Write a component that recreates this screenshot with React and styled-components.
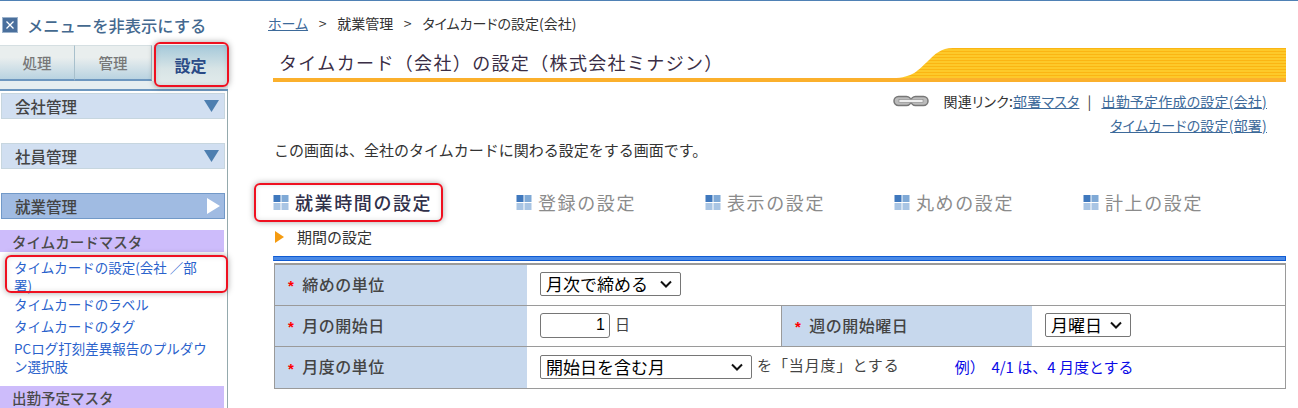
import React from 'react';
import styled, { createGlobalStyle, css } from 'styled-components';

const Global = createGlobalStyle`
  html, body { margin: 0; padding: 0; background: #fff; overflow: hidden; }
  body { font-family: "Noto Sans CJK JP", "Liberation Sans", sans-serif; text-spacing-trim: space-all; }
`;

const chevron = "url(\"data:image/svg+xml,%3Csvg xmlns='http://www.w3.org/2000/svg' width='12' height='8'%3E%3Cpath d='M1 1.5l5 5 5-5' fill='none' stroke='%23111' stroke-width='2'/%3E%3C/svg%3E\")";

const Page = styled.div`
  width: 1298px; height: 408px; overflow: hidden;
  border-top: 1px solid #4f81b5; box-sizing: border-box;
  display: flex; align-items: flex-start;
`;
const Side = styled.aside`
  width: 228px; height: 407px; flex: none; box-sizing: border-box; overflow: hidden;
`;
const Hide = styled.div`
  height: 44px; display: flex; align-items: center; gap: 9px; padding: 4px 0 0 2px; box-sizing: border-box;
  font-size: 16.3px; font-weight: 500; color: #44698f; white-space: nowrap;
`;
const XBox = styled.svg`
  width: 16px; height: 16px; flex: none;
`;
const TopTabs = styled.div`
  display: flex; height: 46px; box-sizing: border-box; border-bottom: 2px solid #6d97bf; width: 229px; padding-bottom: 5px;
  position: relative; background: linear-gradient(#fff 0 36px, #e6eef0 36px);
`;
const TopTab = styled.div`
  height: 36px; width: ${p => p.$w}px; box-sizing: border-box; display: flex; align-items: center; justify-content: center;
  border-right: 1px solid #a8c0cc; border-bottom: 2px solid #6d97bf; border-top: 1px solid #d5dfe2;
  background: linear-gradient(#e9eeee 0%, #e9eeee 35%, #b9d3e1 100%);
  font-size: 14.5px; font-weight: 500; color: #777;
  ${p => p.$active && css`
    height: 43px; border: 0; color: #2a4a86; font-size: 16px; font-weight: 700; margin-left: 2px; width: 73px;
    background: linear-gradient(#a4c8da 0%, #d7e4e6 55%, #e4ecec 100%);
    padding-bottom: 3px;
  `}
`;
const Redbox = styled.span`
  position: absolute; pointer-events: none; box-sizing: border-box; border: 2px solid #ef1020; border-radius: 6px;
  box-shadow: 0 0 6px rgba(0,0,0,.35), inset 0 0 5px rgba(0,0,0,.12);
  left: ${p => p.$l}px; top: ${p => p.$t}px; width: ${p => p.$w}px; height: ${p => p.$h}px;
`;
const Rail = styled.div`
  width: 228px; height: 320px; box-sizing: border-box; border-right: 1px solid #94a9ad; padding: 2px 2px 0 1px;
`;
const Group = styled.div`
  height: 26px; box-sizing: border-box; display: flex; align-items: center; justify-content: space-between;
  margin-bottom: ${p => p.$mb}px; padding: 0 4px 0 13px;
  border: 1px solid ${p => p.$on ? '#7299c8' : '#c7d6df'};
  background: ${p => p.$on ? '#a0bbe2' : '#d1dff1'};
  font-size: 15.5px; font-weight: 500; color: #444;
`;
const Sub = styled.div`
  height: 22px; width: 224px; margin-left: -1px; display: flex; align-items: center; padding-left: 12px; box-sizing: border-box;
  background: #cdbcfb; color: #4a4a4a; font-size: 14.5px; font-weight: 500;
`;
const SideLink = styled.a`
  display: block; box-sizing: border-box; width: 208px; padding-left: 13px; margin-top: ${p => p.$mt || 0}px; margin-bottom: ${p => p.$mb ?? 4}px;
  color: #2a62cc; font-size: 13.5px; line-height: 18px;
`;
const Main = styled.main`
  flex: 1; min-width: 0; padding-left: 40px; position: relative; height: 407px; box-sizing: border-box;
`;
const Crumbs = styled.div`
  margin: 14px 0 0; height: 17px; font-size: 14px; line-height: 17px; color: #333; white-space: pre;
  word-spacing: 2.2px; font-feature-settings: "palt";
  a { color: #3d6a9a; text-decoration: underline; }
`;
const TitleBar = styled.div`
  position: relative; margin: 16px 12px 0 5px; width: 1013px; height: 34px; display: flex; align-items: flex-start;
`;
const Title = styled.h1`
  margin: 2px 0 0 6px; font-size: 18px; font-weight: 400; line-height: 24px; letter-spacing: 1.35px; color: #3a2e45; white-space: nowrap; position: relative;
`;
const Swoosh = styled.svg`
  position: absolute; left: 0; top: 0; width: 1013px; height: 34px;
`;
const Rel = styled.div`
  width: 994px; margin: 7px 0 0 5px; display: flex; flex-direction: column; align-items: flex-end; font-size: 14px; line-height: 24px; color: #333; white-space: pre;
  font-feature-settings: "palt"; letter-spacing: .2px;
  a { color: #3d6a9a; text-decoration: underline; }
`;
const RelRow = styled.div`display: flex; align-items: center;`;
const Sep = styled.span`margin: 0 10px 0 8px;`;
const Intro = styled.p`
  margin: 3px 0 0 6px; font-size: 15px; line-height: 20px; color: #333;
`;
const Tabs = styled.div`
  display: flex; margin: 29px 0 0 5px; height: 26px; align-items: center;
`;
const Tab = styled.div`
  width: ${p => p.$w}px; flex: none; display: flex; align-items: center; gap: 5px; white-space: nowrap;
  font-size: 18px; letter-spacing: 1.6px; color: ${p => p.$on ? '#30304a' : '#8b8b8b'}; font-weight: ${p => p.$on ? 500 : 400};
`;
const Grid4 = styled.svg`width: 17px; height: 17px; flex: none;`;
const Period = styled.div`
  margin: 12px 0 0 7px; display: flex; align-items: center; gap: 13px; font-size: 15px; line-height: 20px; color: #333;
`;
const Tri = styled.span`
  width: 0; height: 0; border-left: 9px solid #f59b10; border-top: 6px solid transparent; border-bottom: 6px solid transparent;
`;
const Blue = styled.div`
  margin: 9px 0 0 5px; width: 1013px; height: 5px; box-sizing: border-box; background: #4b8ae6; border: 1px solid #0f5bd3; border-left-color:#3c7be0;
`;
const Table = styled.div`
  margin: 2px 0 0 6px; width: 1012px; box-sizing: border-box; border: 1px solid #9a9a9a; border-top-width: 2px;
  display: grid; grid-template-columns: 252px 253px 1px 251px 1fr; grid-auto-rows: 41px;
`;
const Th = styled.div`
  background: #c7d8ed; display: flex; align-items: center; gap: 8px; padding: 0 0 3px 13px; font-size: 16px; letter-spacing: .5px; font-weight: 500; color: #444;
  ${p => p.$b && 'border-bottom: 1px solid #9a9a9a;'} ${p => p.$l && 'border-left: 1px solid #9a9a9a;'} box-sizing: border-box;
`;
const Star = styled.span`color: #f00; font: 700 15px/1 "Liberation Sans", sans-serif; position: relative; top: 2px;`;
const Td = styled.div`
  display: flex; align-items: center; padding: 0 0 2px ${p => p.$pl ?? 13}px; box-sizing: border-box; font-size: 15px; color: #444; white-space: pre; min-width: 0;
  grid-column: span ${p => p.$span || 1};
  ${p => p.$b && 'border-bottom: 1px solid #9a9a9a;'}
`;
const Sel = styled.select`
  appearance: none; height: 24px; width: ${p => p.$w}px; box-sizing: border-box; border: 1px solid #767676; border-radius: 2px;
  background: #fff ${chevron} no-repeat right 8px center;
  font: 17px/22px "Noto Sans CJK JP", sans-serif; color: #000; padding: 0 0 0 5px; text-spacing-trim: space-all;
`;
const Num = styled.input`
  width: 70px; height: 25px; box-sizing: border-box; border: 1px solid #767676; border-radius: 3px; text-align: right; padding: 0 4px;
  font: 16px "Liberation Sans", sans-serif; color: #000;
`;
const Ex = styled.span`margin-left: 55px; color: #0a0ae6; font-size: 15px;`;
const Unit = styled.span`margin-left: 5px; position: relative; top: -2px; letter-spacing: .9px;`;

const Icon = () => (
  <Grid4 viewBox="0 0 17 17">
    <rect x="0.5" y="1" width="7" height="7" fill="#3f78bd" />
    <rect x="8.5" y="1" width="7" height="7" fill="#7fa9d6" />
    <rect x="0.5" y="9" width="7" height="7" fill="#a9c5e4" />
    <rect x="8.5" y="9" width="7" height="7" fill="#a9c5e4" />
  </Grid4>
);
const Down = () => (
  <svg width="16" height="14" viewBox="0 0 16 14"><path d="M0 1h15L7.5 13z" fill="#4d7fb0" /></svg>
);
const Right = () => (
  <svg width="13" height="16" viewBox="0 0 13 16"><path d="M0 0l13 8L0 16z" fill="#fff" /></svg>
);
const Chain = () => (
  <svg width="36" height="12" viewBox="0 0 36 12" style={{ marginRight: 15 }}>
    <rect x="1" y="1.5" width="17" height="9" rx="4.5" fill="#bbb" stroke="#777" strokeWidth="1.5" />
    <rect x="18" y="1.5" width="17" height="9" rx="4.5" fill="#bbb" stroke="#777" strokeWidth="1.5" />
    <rect x="6" y="4.5" width="24" height="3" fill="#eee" stroke="#888" strokeWidth=".6" />
  </svg>
);

export default function App() {
  return (
    <Page>
      <Global />
      <Side>
        <Hide>
          <XBox viewBox="0 0 16 16">
            <rect x=".5" y=".5" width="15" height="15" fill="#4a6f9c" stroke="#9db3cc" />
            <path d="M4.5 4.5l7 7M11.5 4.5l-7 7" stroke="#fff" strokeWidth="1.3" />
          </XBox>
          メニューを非表示にする
        </Hide>
        <TopTabs>
          <TopTab $w={75}>処理</TopTab>
          <TopTab $w={77}>管理</TopTab>
          <TopTab $active>設定</TopTab>
        </TopTabs>
        <Rail>
          <Group $mb={24}>会社管理<Down /></Group>
          <Group $mb={24}>社員管理<Down /></Group>
          <Group $on $mb={11}>就業管理<Right /></Group>
          <Sub>タイムカードマスタ</Sub>
          <SideLink $mt={6} $mb={1}>タイムカードの設定(会社 ／部署)</SideLink>
          <SideLink>タイムカードのラベル</SideLink>
          <SideLink>タイムカードのタグ</SideLink>
          <SideLink $mb={11}>PCログ打刻差異報告のプルダウン選択肢</SideLink>
          <Sub>出勤予定マスタ</Sub>
        </Rail>
        <Redbox $l={154} $t={42} $w={75} $h={45} />
        <Redbox $l={5} $t={255} $w={223} $h={38} />
      </Side>
      <Main>
        <Crumbs><a>ホーム</a>  &gt;  就業管理  &gt;  タイムカードの設定(会社)</Crumbs>
        <TitleBar>
          <Swoosh viewBox="0 0 1013 34" preserveAspectRatio="none">
            <defs>
              <pattern id="st" width="4" height="3" patternUnits="userSpaceOnUse">
                <rect width="4" height="3" fill="#fdc92a" />
                <rect width="4" height="1" fill="#fbb513" />
              </pattern>
            </defs>
            <path d="M0 30H620C640 30 645 22 655 13C662 6 668 0 680 0H1013V34H0Z" fill="url(#st)" />
            <rect y="30" width="1013" height="4" fill="#fbb02c" />
          </Swoosh>
          <Title>タイムカード（会社）の設定（株式会社ミナジン）</Title>
        </TitleBar>
        <Rel>
          <RelRow><Chain />関連リンク:<a>部署マスタ</a><Sep>|</Sep><a>出勤予定作成の設定(会社)</a></RelRow>
          <RelRow><a>タイムカードの設定(部署)</a></RelRow>
        </Rel>
        <Intro>この画面は、全社のタイムカードに関わる設定をする画面です。</Intro>
        <Tabs>
          <Tab $w={243} $on><Icon />就業時間の設定</Tab>
          <Tab $w={189}><Icon />登録の設定</Tab>
          <Tab $w={189}><Icon />表示の設定</Tab>
          <Tab $w={189}><Icon />丸めの設定</Tab>
          <Tab $w={189}><Icon />計上の設定</Tab>
        </Tabs>
        <Period><Tri />期間の設定</Period>
        <Blue />
        <Table>
          <Th $b><Star>*</Star>締めの単位</Th>
          <Td $span={4} $b><Sel $w={141} defaultValue="a"><option value="a">月次で締める</option></Sel></Td>
          <Th $b><Star>*</Star>月の開始日</Th>
          <Td $b><Num defaultValue="1" /><Unit>日</Unit></Td>
          <Td $b $pl={0} />
          <Th $b $l><Star>*</Star>週の開始曜日</Th>
          <Td $b><Sel $w={86} defaultValue="a"><option value="a">月曜日</option></Sel></Td>
          <Th><Star>*</Star>月度の単位</Th>
          <Td $span={4}>
            <Sel $w={212} defaultValue="a"><option value="a">開始日を含む月</option></Sel>
            <Unit>を「当月度」とする</Unit>
            <Ex>例）  4/1 は、4 月度とする</Ex>
          </Td>
        </Table>
        <Redbox $l={26} $t={182} $w={189} $h={39} />
      </Main>
    </Page>
  );
}
